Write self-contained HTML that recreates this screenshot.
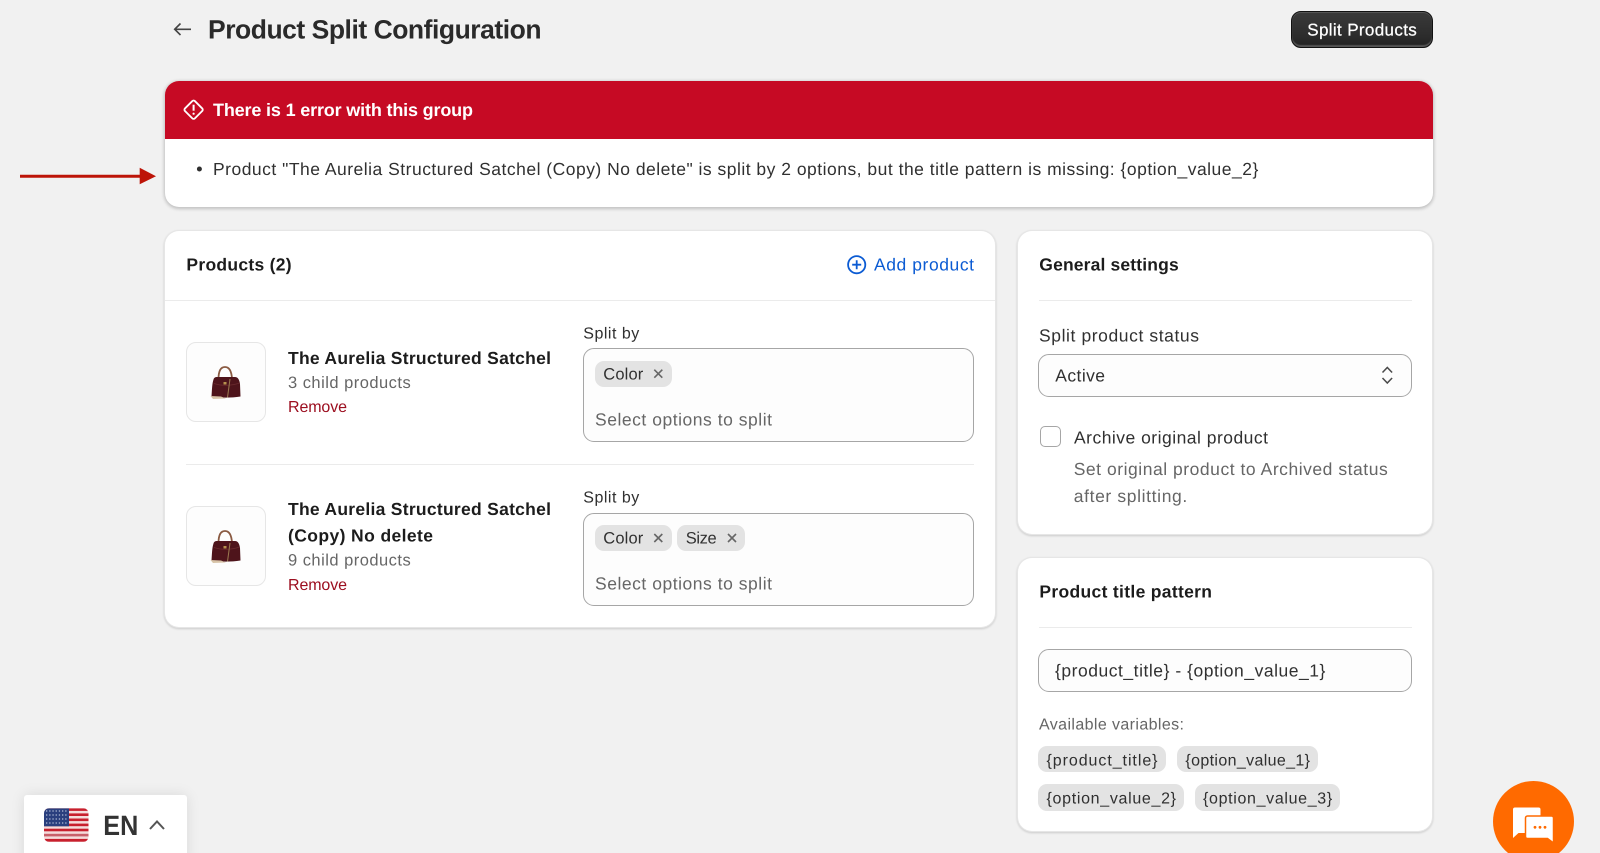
<!DOCTYPE html>
<html lang="en">
<head>
<meta charset="utf-8">
<title>Product Split Configuration</title>
<style>
html{margin:0;padding:0;width:1600px;height:853px;overflow:hidden;background:#f1f1f1;}
body{margin:0;padding:0;position:relative;width:1600px;height:853px;overflow:hidden;background:#f1f1f1;font-family:"Liberation Sans",sans-serif;}
.card{position:absolute;background:#fff;border-radius:14px;box-shadow:0 0 0 1px #e6e6e6,0 1px 2px 1px rgba(0,0,0,.16);}
.hr{position:absolute;height:1px;background:#ebebeb;}
.box{position:absolute;box-sizing:border-box;background:#fdfdfd;border:1px solid #a6a6a6;border-radius:11px;}
.chip{position:absolute;background:#e3e3e3;border-radius:9px;}
.thumb{position:absolute;box-sizing:border-box;width:80px;height:80px;background:#fdfdfd;border:1px solid #e6e6e6;border-radius:10px;}
#btn{position:absolute;left:1291px;top:11px;width:142px;height:37px;box-sizing:border-box;border-radius:10px;border:1px solid #111;background:linear-gradient(#3a3a3a,#2c2c2c 70%,#222);box-shadow:inset 0 1px 0 #555,inset 0 -2px 1px #555;}
#err{position:absolute;left:164.5px;top:80.5px;width:1268px;height:126.5px;border-radius:14px;background:#fff;box-shadow:0 1px 3px 1px rgba(0,0,0,.2);overflow:hidden;}
#errh{height:58px;background:#c60a24;}
#lang{position:absolute;left:24px;top:795px;width:163px;height:70px;background:#fff;border-radius:3px;box-shadow:0 0 14px rgba(0,0,0,.1);}
#chat{position:absolute;left:1493px;top:781px;width:81px;height:81px;border-radius:50%;background:#ff6a00;}
#ov{position:absolute;left:0;top:0;}
text{font-family:"Liberation Sans",sans-serif;font-size:17.5px;fill:#303030;text-rendering:geometricPrecision;transform:translateY(-.6px);}
.b{font-weight:700;fill:#1c1c1c;font-size:17.5px;}
.g{fill:#666;}
.s{font-size:16px;}
</style>
</head>
<body>
<div id="btn"></div>
<div id="err"><div id="errh"></div></div>
<div class="card" style="left:165px;top:231px;width:830px;height:395.5px;"></div>
<div class="card" style="left:1018px;top:231px;width:414px;height:303px;"></div>
<div class="card" style="left:1018px;top:558px;width:414px;height:273px;"></div>
<div class="hr" style="left:165px;top:299.5px;width:830px;"></div>
<div class="hr" style="left:186px;top:463.5px;width:788px;"></div>
<div class="hr" style="left:1039px;top:299.5px;width:373px;"></div>
<div class="hr" style="left:1039px;top:626.5px;width:373px;"></div>
<div class="thumb" style="left:186px;top:342px;"></div>
<div class="thumb" style="left:186px;top:506px;"></div>
<div class="box" style="left:583px;top:348px;width:391px;height:93.5px;"></div>
<div class="box" style="left:583px;top:512.5px;width:391px;height:93.5px;"></div>
<div class="chip" style="left:595px;top:360.5px;width:77px;height:26.5px;"></div>
<div class="chip" style="left:595px;top:525px;width:77px;height:26px;"></div>
<div class="chip" style="left:677px;top:525px;width:68px;height:26px;"></div>
<div class="box" style="left:1038px;top:354px;width:374px;height:42.5px;"></div>
<div class="box" style="left:1040px;top:426px;width:21px;height:21px;border-radius:5px;background:#fff;"></div>
<div class="box" style="left:1038px;top:649px;width:374px;height:42.5px;"></div>
<div class="chip" style="left:1038px;top:746px;width:128px;height:26px;"></div>
<div class="chip" style="left:1177px;top:746px;width:141px;height:26px;"></div>
<div class="chip" style="left:1038px;top:784px;width:146px;height:26.5px;"></div>
<div class="chip" style="left:1195px;top:784px;width:145px;height:26.5px;"></div>
<div id="lang"></div>
<div id="chat"></div>

<svg id="ov" width="1600" height="853" viewBox="0 0 1600 853" xmlns="http://www.w3.org/2000/svg">
  <defs>
    <g id="bag">
      <path d="M218.500 379C218.500 370 221.500 367 225 367C228.500 367 231.500 370 232 379" fill="none" stroke="#8a5a42" stroke-width="1.800"/>
      <path d="M211.500 396.500C212 390 212 384 213.500 379.500C214 377.500 215.500 377 217 377L235 377C238 377 239.500 380 240 384L240.500 396.500C231 398 220 398 211.500 396.500Z" fill="#4e141b"/>
      <path d="M214 383.500C221 386 231 386 239.500 383" fill="none" stroke="#6a2a2e" stroke-width=".8"/>
      <path d="M210.500 396L221 396.500L226 398.500L213 399Z" fill="#d8c4a8"/>
      <path d="M230 379L227.500 397.500" stroke="#9a7a50" stroke-width="1" fill="none"/>
      <rect x="223.500" y="382" width="3" height="2.500" fill="#b8924e"/>
    </g>
    <path id="x" d="M-4 -4L4 4M4 -4L-4 4" fill="none" stroke="#666" stroke-width="1.600"/>
  </defs>

  <path d="M191 29.300H175M180.500 23.500L174.700 29.300L180.500 35" fill="none" stroke="#444" stroke-width="1.600"/>
  <text class="b" x="208" y="39" style="font-size:26.500px;fill:#2a2a2a" textLength="333.500">Product Split Configuration</text>
  <text x="1307.300" y="36" style="font-size:17px;fill:#fff;stroke:#fff;stroke-width:.25px" textLength="109.500">Split Products</text>

  <g transform="translate(193.600 109.700)" fill="none" stroke="#fff" stroke-width="1.800">
    <rect x="-7" y="-7" width="14" height="14" rx="1.800" transform="rotate(45)"/>
    <path d="M0 -5V1" stroke-width="2"/>
    <circle cx="0" cy="4" r="1.100" fill="#fff" stroke="none"/>
  </g>
  <text x="213" y="116.500" style="font-size:18px;font-weight:700;fill:#fff" textLength="260">There is 1 error with this group</text>
  <circle cx="199.400" cy="169" r="2.500" fill="#303030"/>
  <text x="213" y="175.500" textLength="1045.300">Product "The Aurelia Structured Satchel (Copy) No delete" is split by 2 options, but the title pattern is missing: {option_value_2}</text>
  <path d="M20 176.300H142" stroke="#bd1408" stroke-width="3"/>
  <path d="M139.700 167.700L156 176.300L139.700 184.300Z" fill="#bd1408"/>

  <text class="b" x="186.400" y="271" textLength="105.200">Products (2)</text>
  <g fill="none" stroke="#0b5bd3" stroke-width="1.800">
    <circle cx="856.700" cy="264.700" r="8.600"/>
    <path d="M856.700 260.200V269.200M852.200 264.700H861.200"/>
  </g>
  <text x="874" y="271" style="fill:#0b5bd3" textLength="100">Add product</text>

  <use href="#bag"/>
  <use href="#bag" y="164"/>
  <text class="b" x="288" y="364.500" textLength="263">The Aurelia Structured Satchel</text>
  <text class="g" x="288" y="388.500" style="font-size:16.500px" textLength="122.700">3 child products</text>
  <text x="288" y="412.500" style="font-size:16px;fill:#9c0f20" textLength="59">Remove</text>
  <text class="b" x="288" y="515.500" textLength="263">The Aurelia Structured Satchel</text>
  <text class="b" x="288" y="542" textLength="145">(Copy) No delete</text>
  <text class="g" x="288" y="566" style="font-size:16.500px" textLength="122.700">9 child products</text>
  <text x="288" y="590.500" style="font-size:16px;fill:#9c0f20" textLength="59">Remove</text>

  <text class="s" x="583.300" y="339" textLength="56">Split by</text>
  <text x="603.300" y="380" style="font-size:16.500px" textLength="40">Color</text>
  <use href="#x" x="658.300" y="373.700"/>
  <text class="g" x="595" y="426" textLength="177">Select options to split</text>
  <text class="s" x="583.300" y="503" textLength="56">Split by</text>
  <text x="603.300" y="544.300" style="font-size:16.500px" textLength="40">Color</text>
  <use href="#x" x="658.300" y="538"/>
  <text x="685.700" y="544.300" style="font-size:16.500px" textLength="31">Size</text>
  <use href="#x" x="732" y="538"/>
  <text class="g" x="595" y="590.300" textLength="177">Select options to split</text>

  <text class="b" x="1039.300" y="271" textLength="139.400">General settings</text>
  <text x="1039" y="342.300" textLength="160">Split product status</text>
  <text x="1055.300" y="382" textLength="49.700">Active</text>
  <path d="M1382.500 372.500L1387.300 367.500L1392.100 372.500M1382.500 378L1387.300 383L1392.100 378" fill="none" stroke="#4a4a4a" stroke-width="1.500"/>
  <text x="1074" y="444" textLength="194">Archive original product</text>
  <text class="g" x="1073.700" y="475.700" textLength="314">Set original product to Archived status</text>
  <text class="g" x="1073.700" y="502.800" textLength="113.600">after splitting.</text>

  <text class="b" x="1039.400" y="598.300" textLength="172.600">Product title pattern</text>
  <text x="1055" y="677.300" textLength="270.400">{product_title} - {option_value_1}</text>
  <text class="g s" x="1039" y="730.300" textLength="145">Available variables:</text>
  <text class="s" x="1046.500" y="766" textLength="111">{product_title}</text>
  <text class="s" x="1185.400" y="766" textLength="124.600">{option_value_1}</text>
  <text class="s" x="1046.500" y="804.300" textLength="129.500">{option_value_2}</text>
  <text class="s" x="1203" y="804.300" textLength="129.200">{option_value_3}</text>

  <g>
    <path d="M1515 807.500H1538.500a2 2 0 0 1 2 2V831a2 2 0 0 1 -2 2H1518.500L1513 838V809.500a2 2 0 0 1 2 -2Z" fill="#fff"/>
    <path d="M1527.500 816H1551.500a2 2 0 0 1 2 2V843L1547.500 838.500H1527.500a2 2 0 0 1 -2 -2V818a2 2 0 0 1 2 -2Z" fill="#fff" stroke="#ff6a00" stroke-width="1.500"/>
    <circle cx="1535" cy="827.300" r="1.400" fill="#ff6a00"/>
    <circle cx="1540" cy="827.300" r="1.400" fill="#ff6a00"/>
    <circle cx="1545" cy="827.300" r="1.400" fill="#ff6a00"/>
  </g>

  <clipPath id="fc"><rect x="44" y="808.300" width="44.500" height="33.500" rx="5"/></clipPath>
  <g clip-path="url(#fc)">
    <rect x="44" y="808" width="45" height="34" fill="#f4dcdc"/>
    <rect x="44" y="808.300" width="45" height="2.600" fill="#c8202e"/>
    <rect x="44" y="813.400" width="45" height="2.600" fill="#c8202e"/>
    <rect x="44" y="818.500" width="45" height="2.600" fill="#c8202e"/>
    <rect x="44" y="823.600" width="45" height="2.600" fill="#c8202e"/>
    <rect x="44" y="828.700" width="45" height="2.600" fill="#c8202e"/>
    <rect x="44" y="833.800" width="45" height="2.600" fill="#c8606a"/>
    <rect x="44" y="838.900" width="45" height="3" fill="#c8202e"/>
    <rect x="44" y="808.300" width="25" height="18" fill="#2a3f7e"/>
    <path d="M46 811H68M46 815H68M46 819H68M46 823H68" stroke="#b4bdd8" stroke-width="1.300" stroke-dasharray="1.300 1.900"/>
  </g>
  <text x="103.300" y="835" style="font-size:28px;font-weight:700;fill:#333;transform:none" textLength="35" lengthAdjust="spacingAndGlyphs">EN</text>
  <path d="M150 829L157 821.500L164 829" fill="none" stroke="#555" stroke-width="2"/>
</svg>
</body>
</html>
